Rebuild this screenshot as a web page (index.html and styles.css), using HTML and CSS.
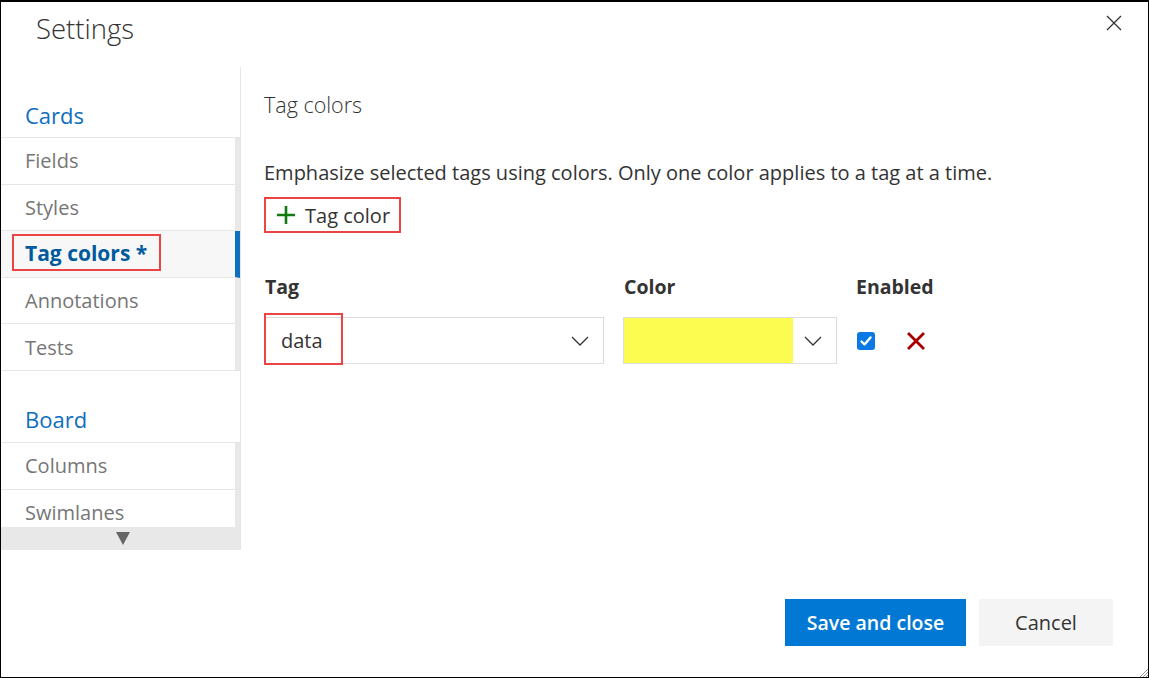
FILE: index.html
```html
<!DOCTYPE html>
<html lang="en">
<head>
<meta charset="utf-8">
<title>Settings</title>
<link rel="stylesheet" href="styles.css">
</head>
<body>
<div class="dialog">
  <header class="dialog-header">
    <h1 class="dialog-title">Settings</h1>
    <button class="close-btn" aria-label="Close">
      <svg width="16" height="16" viewBox="0 0 16 16"><path d="M1 1L15 15M15 1L1 15" stroke="#333" stroke-width="1.3" fill="none"/></svg>
    </button>
  </header>
  <div class="dialog-body">
    <nav class="nav">
      <div class="nav-group-title first">Cards</div>
      <ul class="nav-list">
        <li class="nav-item">Fields</li>
        <li class="nav-item">Styles</li>
        <li class="nav-item selected"><span class="mark-nav">Tag colors *</span></li>
        <li class="nav-item">Annotations</li>
        <li class="nav-item">Tests</li>
      </ul>
      <div class="nav-group-title">Board</div>
      <ul class="nav-list clipped">
        <li class="nav-item">Columns</li>
        <li class="nav-item">Swimlanes</li>
      </ul>
      <div class="nav-scroll-down"><span class="tri"></span></div>
    </nav>
    <main class="content">
      <h2 class="section-title">Tag colors</h2>
      <p class="description">Emphasize selected tags using colors. Only one color applies to a tag at a time.</p>
      <button class="add-btn">
        <svg width="20" height="20" viewBox="0 0 20 20"><path d="M10 1V19M1 10H19" stroke="#107c10" stroke-width="2.6" fill="none"/></svg>
        <span>Tag color</span>
      </button>
      <div class="tag-table">
        <div class="th">Tag</div>
        <div class="th">Color</div>
        <div class="th">Enabled</div>
        <div class="select tag-select">
          <span class="select-value">data</span>
          <svg class="chev" width="18" height="10" viewBox="0 0 18 10"><path d="M1 1L9 9L17 1" stroke="#333" stroke-width="1.3" fill="none"/></svg>
          <span class="mark-data"></span>
        </div>
        <div class="select color-select">
          <span class="swatch"></span>
          <svg class="chev" width="18" height="10" viewBox="0 0 18 10"><path d="M1 1L9 9L17 1" stroke="#333" stroke-width="1.3" fill="none"/></svg>
        </div>
        <div class="enabled-cell">
          <span class="checkbox">
            <svg width="18" height="18" viewBox="0 0 18 18"><path d="M4.5 9.5L7.5 12.5L13.5 5.5" stroke="#fff" stroke-width="2.4" fill="none" stroke-linecap="round" stroke-linejoin="round"/></svg>
          </span>
          <svg class="delete" width="20" height="20" viewBox="0 0 20 20"><path d="M2 2L18 18M18 2L2 18" stroke="#a80000" stroke-width="2.8" fill="none"/></svg>
        </div>
      </div>
    </main>
  </div>
  <footer class="dialog-footer">
    <button class="btn btn-primary">Save and close</button>
    <button class="btn btn-default">Cancel</button>
  </footer>
  <svg class="grip" width="10" height="10" viewBox="0 0 10 10"><path d="M10 2L2 10M10 5L5 10M10 8L8 10" stroke="#999" stroke-width="1" fill="none"/></svg>
</div>
</body>
</html>
```

FILE: styles.css
```css
* { box-sizing: border-box; }
html, body { margin: 0; padding: 0; background: #fff; }
body { font-family: "Open Sans", "Noto Sans", sans-serif; color: #333; }
ul { list-style: none; margin: 0; padding: 0; }
button { font-family: inherit; border: none; background: none; padding: 0; cursor: pointer; }

.dialog {
  position: relative;
  width: 1149px;
  height: 678px;
  border: 1px solid #000;
  border-top-width: 2px;
  display: flex;
  flex-direction: column;
  overflow: hidden;
}

.dialog-header {
  height: 65px;
  display: flex;
  justify-content: space-between;
  align-items: flex-start;
  padding: 0 26px 0 35px;
}
.dialog-title {
  margin: 7px 0 0;
  font-size: 27.5px;
  line-height: 40px;
  font-weight: 300;
  color: #333;
}
.close-btn { margin-top: 13px; width: 16px; height: 16px; }
.close-btn svg { display: block; }

.dialog-body { display: flex; height: 483px; }

.nav {
  width: 240px;
  flex: none;
  border-right: 1px solid #e6e6e6;
  display: flex;
  flex-direction: column;
}
.nav-group-title {
  height: 72px;
  padding: 30px 0 0 24px;
  font-size: 22px;
  color: #106ebe;
  border-bottom: 1px solid #e6e6e6;
  line-height: 36px;
}
.nav-group-title.first { height: 71px; }
.nav-item {
  height: 46.6px;
  border-bottom: 1px solid #e6e6e6;
  border-right: 5px solid #e8e8e8;
  padding-left: 24px;
  font-size: 20px;
  color: #767676;
  display: flex;
  align-items: center;
}
.nav-item.selected {
  background: #f7f7f7;
  border-right-color: #106ebe;
  font-weight: 700;
  color: #005a9e;
  position: relative;
}
.nav-list.clipped { height: 84px; overflow: hidden; }
.nav-list.clipped .nav-item:last-child { border-bottom: none; }
.nav-scroll-down {
  height: 23px;
  background: #e8e8e8;
  display: flex;
  justify-content: center;
  align-items: center;
  padding-left: 5px;
}
.tri {
  width: 0; height: 0;
  border-left: 7px solid transparent;
  border-right: 7px solid transparent;
  border-top: 13px solid #666;
}

.mark-nav {
  position: absolute;
  left: 11px;
  top: 3px;
  width: 149px;
  height: 37px;
  border: 2px solid #ec4444;
  display: flex;
  align-items: center;
  padding-left: 11px;
  font-size: 21px;
}

.content { flex: 1; padding: 23px 0 0 23px; }
.section-title {
  margin: 0;
  font-size: 21.5px;
  font-weight: 300;
  color: #333;
  line-height: 30px;
}
.description {
  margin: 40px 0 0;
  font-size: 20px;
  line-height: 26px;
  color: #333;
}
.add-btn {
  margin-top: 11px;
  width: 137px;
  height: 36px;
  border: 2px solid #ec4444;
  display: flex;
  align-items: center;
  gap: 9px;
  padding-left: 10px;
  font-size: 20px;
  color: #333;
}
.add-btn svg { display: block; }

.tag-table {
  margin-top: 41px;
  display: grid;
  grid-template-columns: 340px 214px auto;
  column-gap: 19px;
  row-gap: 17px;
  align-items: center;
}
.th { font-size: 19.5px; font-weight: 700; color: #333; padding-left: 1px; line-height: 26px; }
.tag-table .th:nth-child(3) { margin-left: -1px; }
.select {
  position: relative;
  height: 47px;
  border: 1px solid #ddd;
  display: flex;
  align-items: center;
}
.select .chev { position: absolute; right: 14px; top: 18px; }
.select-value { padding-left: 16px; font-size: 20px; color: #333; }
.mark-data {
  position: absolute;
  left: -1px;
  top: -5px;
  width: 79px;
  height: 52px;
  border: 2px solid #ec4444;
}
.swatch { align-self: stretch; width: 169px; background: #fcfc50; }
.enabled-cell { display: flex; align-items: center; gap: 31px; padding-left: 1px; }
.checkbox {
  width: 18px; height: 18px;
  border-radius: 3px;
  background: #0a79e6;
  display: block;
}
.checkbox svg, .delete { display: block; }

.dialog-footer {
  flex: 1;
  display: flex;
  justify-content: flex-end;
  align-items: flex-start;
  gap: 13px;
  padding: 49px 35px 0 0;
}
.btn { height: 47px; font-size: 20px; }
.btn-primary { width: 181px; background: #0078d4; color: #fff; font-weight: 600; font-size: 19.5px; }
.btn-default { width: 134px; background: #f4f4f4; color: #333; }

.grip { position: absolute; right: 0; bottom: 0; }
```
